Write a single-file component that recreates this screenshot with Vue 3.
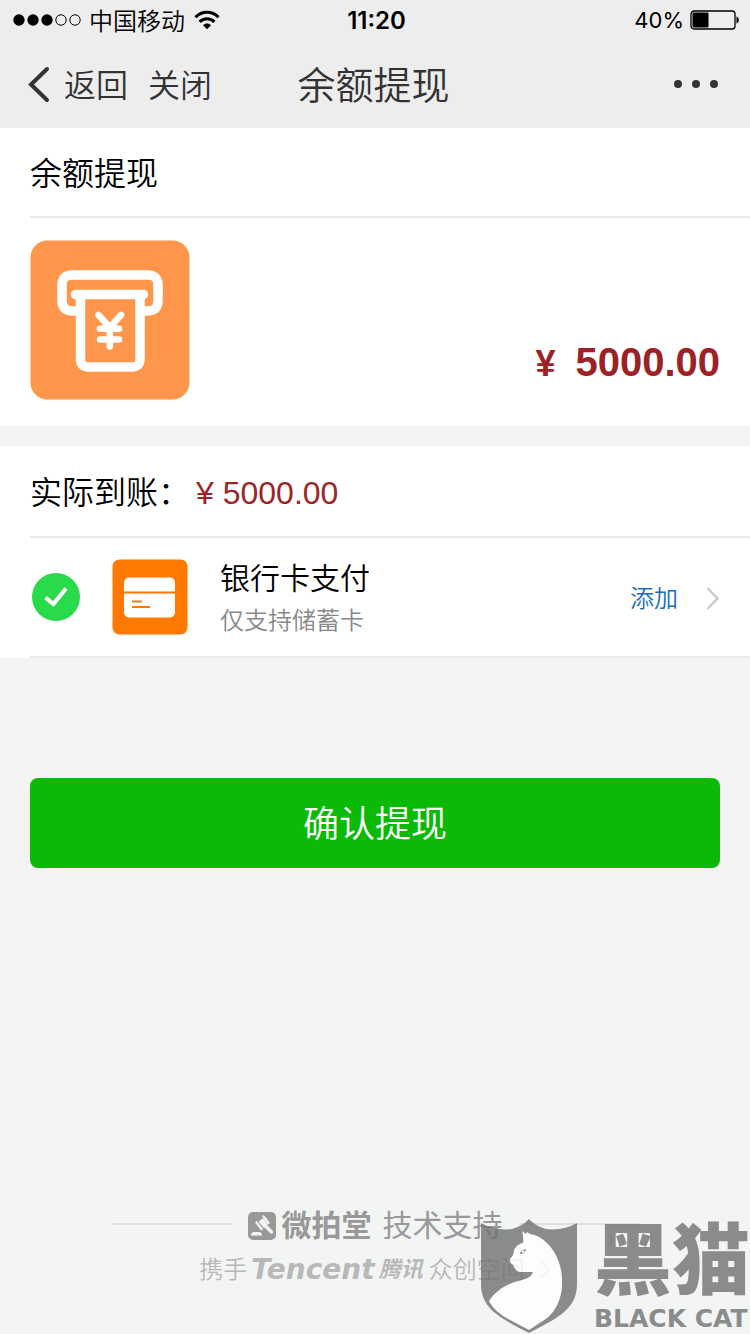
<script setup>
import { ref } from 'vue'

const method = ref('bank')
const amount = '5000.00'
</script>

<template>
  <div class="page">
    <header class="top">
      <div class="status">
        <div class="carrier">
          <svg width="68" height="12" viewBox="0 0 68 12" aria-hidden="true">
            <circle cx="6" cy="6" r="5.7" /><circle cx="20" cy="6" r="5.7" /><circle cx="34" cy="6" r="5.7" />
            <g fill="none" stroke="#000" stroke-width="1"><circle cx="48" cy="6" r="5.2" /><circle cx="62" cy="6" r="5.2" /></g>
          </svg>
          <span class="operator">中国移动</span>
          <svg class="wifi" width="26" height="20" viewBox="0 0 26 20" aria-hidden="true">
            <g fill="none" stroke="#000" stroke-width="3">
              <path d="M1.500 7.200C8 .6 18 .6 24.500 7.200" />
              <path d="M5.600 11.900c4.200-4.200 10.600-4.200 14.800 0" />
            </g>
            <path d="M13 19.300l-4-4.100c2.200-2.100 5.800-2.100 8 0z" />
          </svg>
        </div>
        <time class="clock">11:20</time>
        <div class="power">
          <span>40%</span>
          <svg width="50" height="20" viewBox="0 0 50 20" aria-hidden="true">
            <rect x="1" y="1" width="44" height="18" rx="3" fill="none" stroke="#000" stroke-width="1.300" />
            <rect x="2.500" y="2.500" width="16" height="15" rx="1" />
            <path d="M46.500 6.500c3 .6 3 6.400 0 7z" />
          </svg>
        </div>
      </div>
      <nav class="bar">
        <div class="links">
          <button class="plain" type="button">
            <svg width="24" height="38" viewBox="0 0 24 38" aria-hidden="true"><path d="M19 4L3 19.500 19 35" fill="none" stroke="#333" stroke-width="4" stroke-linecap="round" /></svg>
            <span>返回</span>
          </button>
          <button class="plain" type="button"><span>关闭</span></button>
        </div>
        <h1>余额提现</h1>
        <button class="plain more" type="button" aria-label="更多">
          <svg width="46" height="10" viewBox="0 0 46 10" fill="#333"><circle cx="5" cy="5" r="4" /><circle cx="23" cy="5" r="4" /><circle cx="41" cy="5" r="4" /></svg>
        </button>
      </nav>
    </header>

    <main>
      <section class="panel">
        <h2 class="row">余额提现</h2>
        <div class="summary">
          <svg width="160" height="160" viewBox="0 0 160 160" aria-hidden="true">
            <rect x=".5" y=".5" width="159" height="159" rx="17" fill="#ff964c" />
            <g fill="none" stroke="#fff" stroke-width="9.500" stroke-linecap="round" stroke-linejoin="round">
              <path d="M50 71H43Q32 71 32 61V45Q32 35 42 35H118Q128 35 128 45V61Q128 71 117 71H110" stroke-linecap="butt" />
              <path d="M45.500 54.500H113.500" />
              <path d="M50.500 55V119Q50.500 127 58.500 127H102Q110 127 110 119V55" stroke-linecap="butt" />
              <path d="M68.500 75l11.300 12.500L91 75M79.800 88v18.500M70 88.800h19M70 99.500h19" stroke-width="6.500" />
            </g>
          </svg>
          <strong class="total"><span>¥</span>{{ amount }}</strong>
        </div>
      </section>

      <section class="panel">
        <p class="row tall">实际到账：<span class="money">¥ {{ amount }}</span></p>
        <div class="method">
          <label class="choice">
            <span class="check">
              <input v-model="method" type="radio" name="method" value="bank" />
              <svg width="48" height="48" viewBox="0 0 48 48" aria-hidden="true"><path d="M13.500 24.500l7.800 6.500L34 15.500" fill="none" stroke="#fff" stroke-width="4.200" /></svg>
            </span>
            <svg width="76" height="76" viewBox="0 0 76 76" aria-hidden="true">
              <rect x=".5" y=".5" width="75" height="75" rx="7" fill="#ff7800" />
              <rect x="12" y="18.500" width="51" height="40" rx="5" fill="#fff" />
              <path d="M12 33.500h51M20 42.500h10M20 48h18" stroke="#ff7800" stroke-width="2.200" />
            </svg>
            <span class="names">
              <span class="name">银行卡支付</span>
              <small>仅支持储蓄卡</small>
            </span>
          </label>
          <a class="add" href="#">
            添加
            <svg width="14" height="24" viewBox="0 0 14 24" aria-hidden="true"><path d="M1.500 1l10 10.500-10 10.500" fill="none" stroke="#c7c7cc" stroke-width="2.200" /></svg>
          </a>
        </div>
      </section>

      <div class="action"><button class="confirm" type="button">确认提现</button></div>
    </main>

    <footer>
      <div class="support">
        <i class="rule"></i>
        <svg width="28" height="28" viewBox="0 0 28 28" aria-hidden="true">
          <rect width="28" height="28" rx="5" fill="#999" />
          <g fill="none" stroke="#f3f5f5" stroke-linecap="round">
            <path d="M8.500 10.500l5 6.500M15.500 4.500l5 6.500" stroke-width="2.400" />
            <path d="M12 8.500l5 6M13.500 7.500l5 6" stroke-width="3.600" stroke-linecap="butt" />
            <path d="M17.500 14l6 6" stroke-width="3.500" />
          </g>
          <path d="M3 23.500q0-3.500 3-3.500h5q3 0 3 3.500z" fill="#f3f5f5" />
        </svg>
        <b>微拍堂</b>
        <span class="tech">技术支持</span>
        <i class="rule"></i>
      </div>
      <a class="partner" href="#">
        携手<em class="latin">Tencent</em><em class="han">腾讯</em>众创空间
        <svg width="12" height="20" viewBox="0 0 12 20" aria-hidden="true"><path d="M2 2l8 8-8 8" fill="none" stroke="#c8c8c8" stroke-width="2" /></svg>
      </a>
    </footer>

    <div class="watermark">
      <svg width="98" height="116" viewBox="0 0 98 116" aria-hidden="true">
        <path d="M49 1Q55 8 66 11Q83 13 97 5V66C97 90 80 99 49 115C18 99 1 90 1 66V5Q15 13 32 11Q43 8 49 1Z" fill="#717171" />
        <path d="M42 13L46 16L47 14L50 16C66 18 82 38 82 62C83 80 75 97 61 104L49 112L32 103Q14 94 9 83C16 72 28 65 42 62Q51 60 53 54H40C35 53 35 50 33 47Q29 44 30 41Q34 37 34 32Q37 26 43 25Q44 20 42 13Z" fill="#fff" />
        <path d="M40 36q0-4 6-5-1 5-6 5z" fill="#717171" /><circle cx="43" cy="33.500" r="1.300" fill="#fff" />
      </svg>
      <div class="brand">
        <span class="brand-han">黑猫</span>
        <span class="brand-latin">BLACK CAT</span>
      </div>
    </div>
  </div>
</template>

<style>
body { background: #f3f5f5; }
</style>

<style scoped>
.page {
  position: relative;
  display: flex;
  flex-direction: column;
  min-height: 100vh;
  overflow: hidden;
  background: #f3f5f5;
  color: #000;
  font-family: "Liberation Sans", "Noto Sans CJK SC", sans-serif;
  font-weight: 350;
  line-height: 1;
}
.page * { box-sizing: border-box; }
svg { display: block; flex: none; }
h1, h2, p { margin: 0; font-weight: inherit; }
a { text-decoration: none; }
button { font: inherit; border: 0; cursor: pointer; }
.top { height: 128px; background: #ededed; }
.status, .bar { display: grid; grid-template-columns: 1fr auto 1fr; align-items: center; }
.status { height: 40px; padding: 0 10px 0 13px; font-family: Inter, "Noto Sans CJK SC", sans-serif; font-size: 24px; font-weight: 400; }
.carrier, .power { display: flex; align-items: center; }
.carrier { gap: 8px; font-family: "Liberation Sans", "Noto Sans CJK SC", sans-serif; font-weight: 350; }
.operator, h1, .plain span { padding-top: 4px; }
.wifi { margin-left: 1px; }
.clock { padding-top: 2px; font-weight: 600; }
.power { justify-content: flex-end; gap: 6px; font-size: 22px; }
.bar { height: 88px; padding: 0 31px 0 28px; color: #333; }
h1 { font-size: 38px; }
.links { display: flex; gap: 20px; font-size: 32px; }
.plain { display: flex; align-items: center; gap: 12px; padding: 0; background: none; color: inherit; }
.more { justify-self: end; }
.panel { background: #fff; margin-bottom: 20px; }
.row { display: flex; align-items: center; height: 90px; margin-left: 30px; padding-top: 4px; border-bottom: 2px solid #e8e9e9; font-size: 32px; }
.tall { height: 92px; }
.money { margin-left: 6px; color: #9c2528; font-weight: 400; }
.summary { display: flex; justify-content: space-between; align-items: flex-end; padding: 22px 30px 26px; }
.total { padding-bottom: 12px; color: #9c2226; font-size: 40px; font-weight: 700; line-height: 48px; }
.total span { margin-right: 20px; font-size: 36px; }
.method { display: flex; justify-content: space-between; align-items: center; height: 120px; margin-left: 30px; padding-right: 30px; border-bottom: 2px solid #e8e9e9; }
.choice { display: flex; align-items: center; }
.check { display: grid; margin: 0 32px 0 2px; }
.check > * { grid-area: 1 / 1; }
.check input { appearance: none; width: 48px; height: 48px; margin: 0; border-radius: 50%; background: #ccc; }
.check input:checked { background: #29db4b; }
.names { display: flex; flex-direction: column; margin-left: 32px; padding-top: 4px; }
.name { font-size: 30px; line-height: 44px; }
small { color: #888; font-size: 24px; line-height: 40px; }
.add { display: flex; align-items: center; gap: 28px; padding-top: 4px; color: #1a6db8; font-size: 24px; }
.action { margin-top: 80px; padding: 40px 30px; background: #f3f3f3; }
.confirm { display: block; width: 100%; height: 90px; padding: 4px 0 0; border-radius: 8px; background: #0aba07; color: #fff; font-size: 36px; }
footer { margin-top: auto; padding-bottom: 44px; font-size: 24px; }
.support, .partner { display: flex; align-items: center; justify-content: center; height: 44px; padding-top: 4px; }
.support { color: #999; font-size: 30px; }
.support b { margin: 0 11px 0 6px; font-weight: 700; }
.tech { font-weight: 400; }
.rule { width: 120px; height: 2px; margin: 0 16px 4px; background: #dedfdf; }
.partner { color: #b8b8b8; }
.latin { margin: 0 4px; font-family: "DejaVu Sans", sans-serif; font-size: 28px; font-weight: 700; }
.han { margin-right: 6px; font-size: 22px; font-weight: 700; }
.partner svg { margin-left: 14px; }
.watermark { position: absolute; right: 0; bottom: 0; display: flex; gap: 16px; opacity: .8; color: #717171; pointer-events: none; }
.brand { display: flex; flex-direction: column; white-space: nowrap; }
.brand-han { font-size: 78px; font-weight: 900; line-height: 88px; }
.brand-latin { font-family: "DejaVu Sans", sans-serif; font-size: 25px; font-weight: 700; line-height: 26px; }
</style>
